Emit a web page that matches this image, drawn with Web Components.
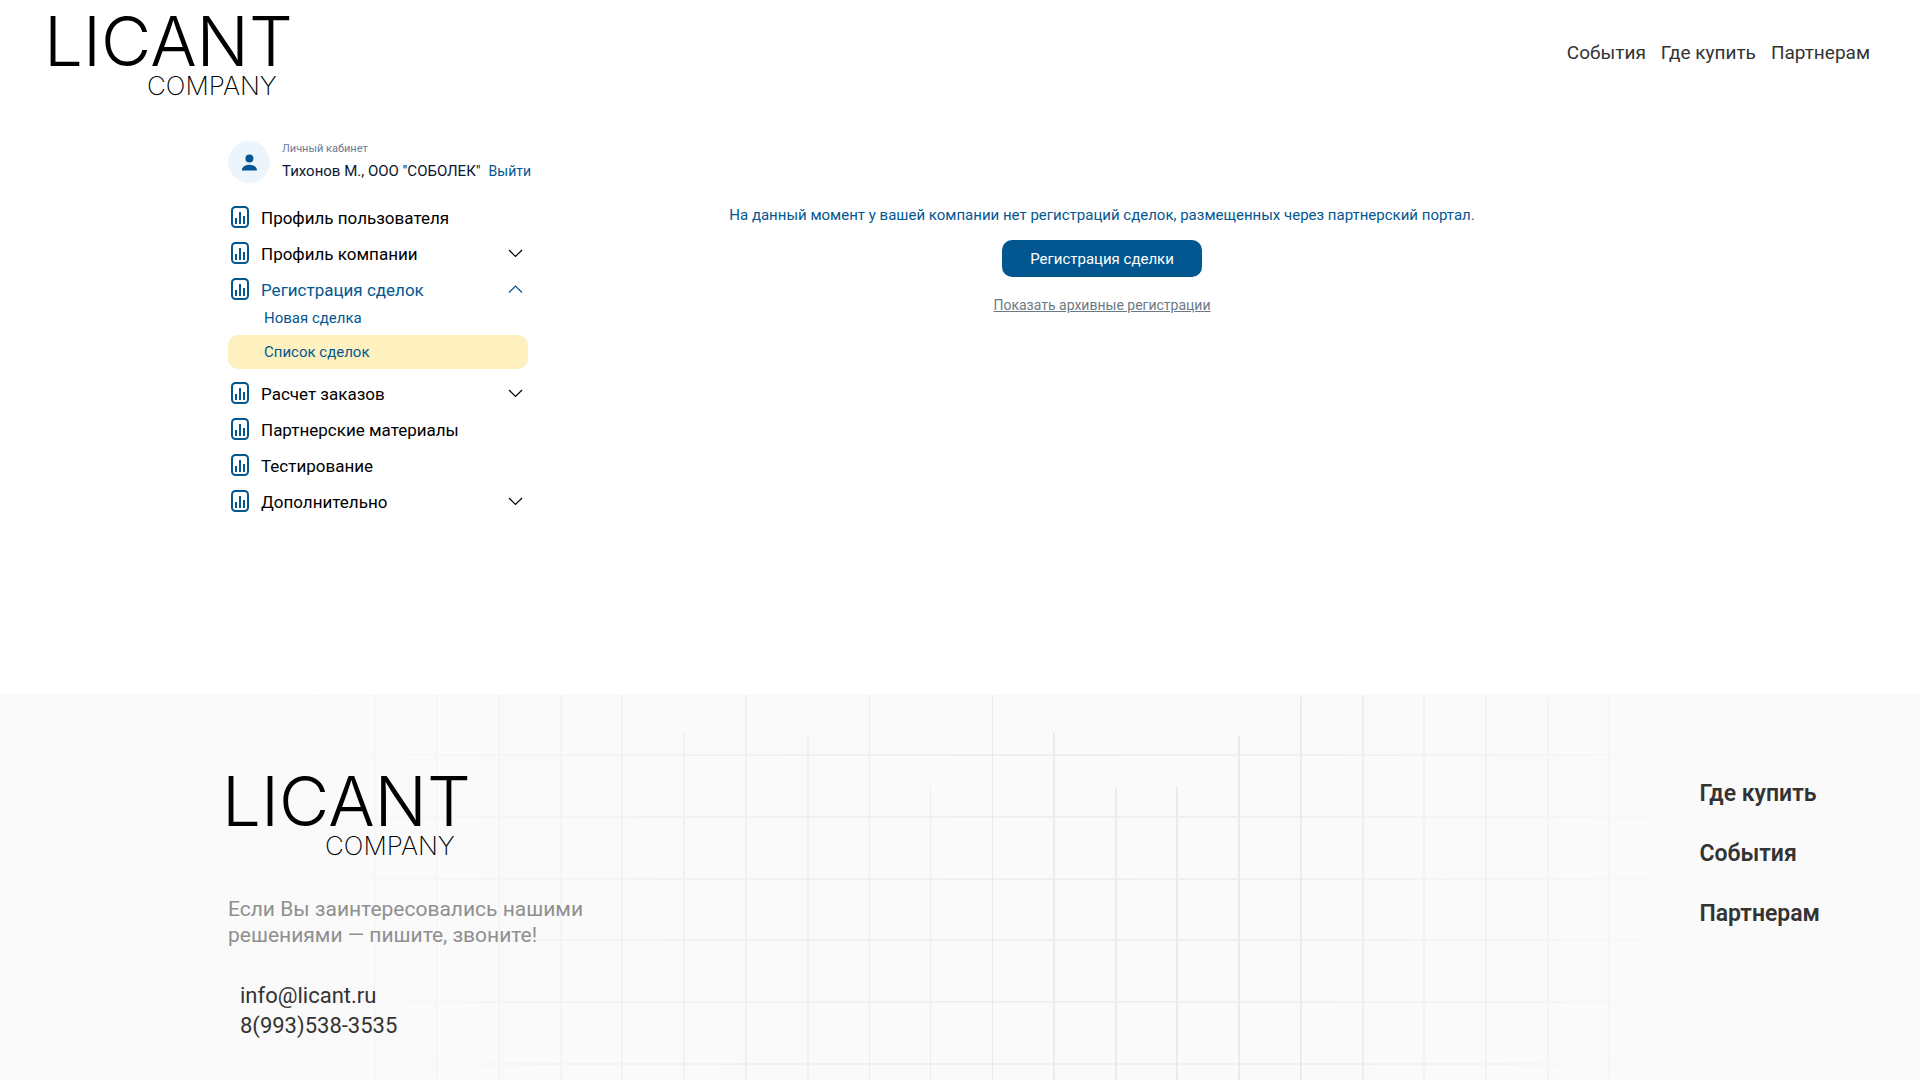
<!DOCTYPE html>
<html lang="ru">
<head>
<meta charset="utf-8">
<title>Licant Company</title>
<style>
  html, body {
    margin: 0;
    min-height: 100%;
  }
  body {
    background: #ffffff;
    color: #000000;
    font-family: Roboto, Inter, sans-serif;
  }
</style>
</head>
<body>
<partner-app></partner-app>

<script>
'use strict';

// Small base class: clones the template of the element into an open shadow root.
class BaseElement extends HTMLElement {
  constructor() {
    super();
    const template = document.createElement('template');
    template.innerHTML = this.createTemplate();
    this.attachShadow({ mode: 'open' });
    this.shadowRoot.appendChild(template.content.cloneNode(true));
  }
}

window.customElements.define('licant-logo', class LicantLogo extends BaseElement {
  createTemplate() {
    return `
      <style>
        :host {
          display: block;
          width: 250px;
        }
        a {
          display: block;
          color: #000000;
          font-family: Inter, sans-serif;
          font-weight: 300;
          text-decoration: none;
        }
        span {
          display: block;
          white-space: nowrap;
        }
        .name {
          margin-left: -6px;
          font-size: 69px;
          line-height: 66px;
        }
        .kind {
          padding-left: 97px;
          font-size: 26px;
          font-weight: 200;
          line-height: 24px;
        }
      </style>
      <a href="#">
        <span class="name">LICANT</span>
        <span class="kind">COMPANY</span>
      </a>
    `;
  }
});

window.customElements.define('site-header', class SiteHeader extends BaseElement {
  createTemplate() {
    return `
      <style>
        :host {
          display: block;
        }
        header {
          display: flex;
          justify-content: space-between;
          align-items: center;
          height: 106px;
          padding: 0 50px;
        }
        nav {
          display: flex;
          gap: 15px;
        }
        a {
          color: #333333;
          font-size: 19px;
          line-height: 24px;
          text-decoration: none;
        }
      </style>
      <header>
        <licant-logo></licant-logo>
        <nav>
          <a href="#">События</a>
          <a href="#">Где купить</a>
          <a href="#">Партнерам</a>
        </nav>
      </header>
    `;
  }
});

window.customElements.define('user-card', class UserCard extends BaseElement {
  createTemplate() {
    return `
      <style>
        :host {
          display: flex;
          align-items: center;
          gap: 12px;
        }
        .avatar {
          flex: none;
        }
        .caption {
          margin-bottom: 3px;
          color: #6b7a99;
          font-size: 11px;
          line-height: 14px;
        }
        .name {
          display: flex;
          gap: 8px;
          color: #0b1733;
          font-size: 15px;
          line-height: 24px;
          white-space: nowrap;
        }
        a {
          color: #035790;
          font-size: 14px;
          text-decoration: none;
        }
      </style>
      <svg class="avatar" width="42" height="42" viewBox="0 0 42 42">
        <circle cx="21" cy="21" r="21" fill="#edf5fc"/>
        <circle cx="21.4" cy="17.5" r="4" fill="#035790"/>
        <path d="M13.8 29.5c0-3.6 3.4-5.8 7.6-5.8s7.6 2.2 7.6 5.8z" fill="#035790"/>
      </svg>
      <div>
        <div class="caption">Личный кабинет</div>
        <div class="name"><slot></slot> <a href="#">Выйти</a></div>
      </div>
    `;
  }
});

window.customElements.define('menu-item', class MenuItem extends BaseElement {
  static get observedAttributes() {
    return ['arrow'];
  }

  attributeChangedCallback() {
    const up = this.getAttribute('arrow') === 'up';
    this.shadowRoot.querySelector('.arrow path').setAttribute('d', up ? 'M1 8.5 7.5 2 14 8.5' : 'M1 2 7.5 8.5 14 2');
  }

  createTemplate() {
    return `
      <style>
        :host {
          display: block;
        }
        .row {
          display: flex;
          align-items: center;
          height: 23px;
          padding: 0 5px 0 3px;
          color: #000000;
          font-size: 17px;
          text-decoration: none;
          white-space: nowrap;
        }
        :host([arrow="up"]) .row {
          color: #035790;
        }
        .icon {
          flex: none;
          align-self: flex-start;
          margin-right: 12px;
        }
        .label {
          flex: 1;
        }
        .arrow {
          flex: none;
        }
        :host(:not([arrow])) .arrow {
          display: none;
        }
      </style>
      <a class="row" href="#">
        <svg class="icon" width="18" height="22" viewBox="0 0 18 22" fill="none" stroke="#035790">
          <rect x="1" y="1" width="16" height="20" rx="3.5" stroke-width="2"/>
          <path d="M5 12v6M9 6v12M13 10v8" stroke-width="2"/>
        </svg>
        <span class="label"><slot></slot></span>
        <svg class="arrow" width="15" height="11" viewBox="0 0 15 11" fill="none" stroke="currentColor" stroke-width="1.2"><path/></svg>
      </a>
      <slot name="sub"></slot>
    `;
  }
});

window.customElements.define('sub-item', class SubItem extends BaseElement {
  createTemplate() {
    return `
      <style>
        :host {
          display: block;
        }
        a {
          display: block;
          padding-left: 36px;
          border-radius: 10px;
          color: #035790;
          font-size: 15px;
          line-height: 34px;
          text-decoration: none;
        }
        :host([active]) a {
          background: #fef1bf;
        }
      </style>
      <a href="#"><slot></slot></a>
    `;
  }
});

window.customElements.define('side-menu', class SideMenu extends BaseElement {
  createTemplate() {
    return `
      <style>
        :host {
          display: block;
        }
        nav {
          display: flex;
          flex-direction: column;
          gap: 13px;
          margin-top: 23px;
        }
      </style>
      <user-card>Тихонов М., ООО "СОБОЛЕК"</user-card>
      <nav>
        <menu-item>Профиль пользователя</menu-item>
        <menu-item arrow="down">Профиль компании</menu-item>
        <menu-item arrow="up">
          Регистрация сделок
          <sub-item slot="sub">Новая сделка</sub-item>
          <sub-item slot="sub" active>Список сделок</sub-item>
        </menu-item>
        <menu-item arrow="down">Расчет заказов</menu-item>
        <menu-item>Партнерские материалы</menu-item>
        <menu-item>Тестирование</menu-item>
        <menu-item arrow="down">Дополнительно</menu-item>
      </nav>
    `;
  }
});

window.customElements.define('deal-list', class DealList extends BaseElement {
  createTemplate() {
    return `
      <style>
        :host {
          display: flex;
          flex-direction: column;
          align-items: center;
          text-align: center;
        }
        p {
          margin: 0 0 13px;
          color: #035790;
          font-size: 15px;
          line-height: 24px;
        }
        button {
          width: 200px;
          height: 37px;
          margin-bottom: 16px;
          padding: 0;
          border: 0;
          border-radius: 10px;
          background: #035790;
          color: #ffffff;
          font-family: inherit;
          font-size: 15px;
          cursor: pointer;
        }
        a {
          color: #6c7a86;
          font-size: 14px;
          line-height: 24px;
        }
      </style>
      <p>На данный момент у вашей компании нет регистраций сделок, размещенных через партнерский портал.</p>
      <button type="button">Регистрация сделки</button>
      <a href="#">Показать архивные регистрации</a>
    `;
  }
});

window.customElements.define('footer-grid', class FooterGrid extends BaseElement {
  constructor() {
    super();
    // x, top, stroke width, colour of every vertical line
    const columns = [
      [314, 0, 2, '#f8f8f8'], [375, 0, 2, '#f7f7f7'], [437, 0, 2, '#f6f6f6'], [499, 0, 2, '#f5f5f5'],
      [561, 0, 2, '#f3f3f3'], [622, 0, 2, '#f2f2f2'], [684, 38, 2, '#f1f1f1'], [746, 0, 2, '#f0f0f0'],
      [808, 38, 2, '#f0f0f0'], [869.5, 0, 1, '#ededed'], [930.5, 92, 1, '#ededed'], [992.5, 0, 1, '#ebebeb'],
      [1054, 38, 2, '#ebebeb'], [1116, 92, 2, '#ebebeb'], [1177, 92, 2, '#ebebeb'], [1239, 41, 2, '#ebebeb'],
      [1301, 2, 2, '#ebebeb'], [1363, 0, 2, '#eeeeee'], [1424, 1, 2, '#f3f3f3'], [1486, 2, 2, '#f2f2f2'],
      [1548, 2, 2, '#f4f4f4'], [1609, 2, 2, '#f6f6f6'], [1671, 2, 2, '#f8f8f8'], [1732.5, 170, 1, '#f8f8f8']
    ];
    const rows = [59, 121, 183, 244, 306, 368];
    const group = this.shadowRoot.querySelector('g');
    group.innerHTML =
      rows.map(y => `<rect x="240" y="${y}" width="1510" height="2" fill="url(#fade)"/>`).join('') +
      columns.map(([x, top, width, color]) =>
        `<rect x="${x - width / 2}" y="${top}" width="${width}" height="${800 - top}" fill="${color}"/>`).join('');
  }

  createTemplate() {
    return `
      <style>
        :host {
          display: block;
          position: absolute;
          inset: 0;
          overflow: hidden;
        }
        svg {
          display: block;
          width: 100%;
        }
      </style>
      <svg viewBox="0 0 1920 800" aria-hidden="true">
        <defs>
          <linearGradient id="fade">
            <stop offset="0" stop-color="#fafafa"/>
            <stop offset="0.3" stop-color="#f2f2f2"/>
            <stop offset="0.5" stop-color="#efefef"/>
            <stop offset="0.7" stop-color="#f0f0f0"/>
            <stop offset="1" stop-color="#fafafa"/>
          </linearGradient>
        </defs>
        <g></g>
      </svg>
    `;
  }
});

window.customElements.define('site-footer', class SiteFooter extends BaseElement {
  createTemplate() {
    return `
      <style>
        :host {
          display: block;
          position: relative;
          background: #fafafa;
        }
        footer {
          display: flex;
          justify-content: space-between;
          position: relative;
          padding: 73px 100px 36px 228px;
        }
        p {
          max-width: 380px;
          margin: 38px 0 0;
          color: #8f8f8f;
          font-size: 21px;
          line-height: 26px;
        }
        address {
          display: flex;
          flex-direction: column;
          margin-top: 33px;
          padding-left: 12px;
          font-size: 22px;
          font-style: normal;
          line-height: 30px;
        }
        a {
          color: #333333;
          text-decoration: none;
        }
        nav {
          display: flex;
          flex-direction: column;
          gap: 30px;
          padding-top: 11px;
          font-size: 23px;
          font-weight: 600;
          line-height: 30px;
        }
      </style>
      <footer-grid></footer-grid>
      <footer>
        <div>
          <licant-logo></licant-logo>
          <p>Если Вы заинтересовались нашими решениями — пишите, звоните!</p>
          <address>
            <a href="mailto:info@licant.ru">info@licant.ru</a>
            <a href="tel:89935383535">8(993)538-3535</a>
          </address>
        </div>
        <nav>
          <a href="#">Где купить</a>
          <a href="#">События</a>
          <a href="#">Партнерам</a>
        </nav>
      </footer>
    `;
  }
});

window.customElements.define('partner-app', class PartnerApp extends BaseElement {
  createTemplate() {
    return `
      <style>
        :host {
          display: flex;
          flex-direction: column;
          min-height: 100vh;
        }
        main {
          display: flex;
          box-sizing: border-box;
          width: 100%;
          max-width: 1464px;
          min-height: 589px;
          margin: 0 auto;
          padding-top: 35px;
          gap: 24px;
        }
        side-menu {
          flex: 0 0 300px;
          min-width: 0;
        }
        deal-list {
          flex: 1;
          padding: 62px 40px 0 0;
        }
        site-footer {
          flex: 1;
        }
      </style>
      <site-header></site-header>
      <main>
        <side-menu></side-menu>
        <deal-list></deal-list>
      </main>
      <site-footer></site-footer>
    `;
  }
});
</script>
</body>
</html>
